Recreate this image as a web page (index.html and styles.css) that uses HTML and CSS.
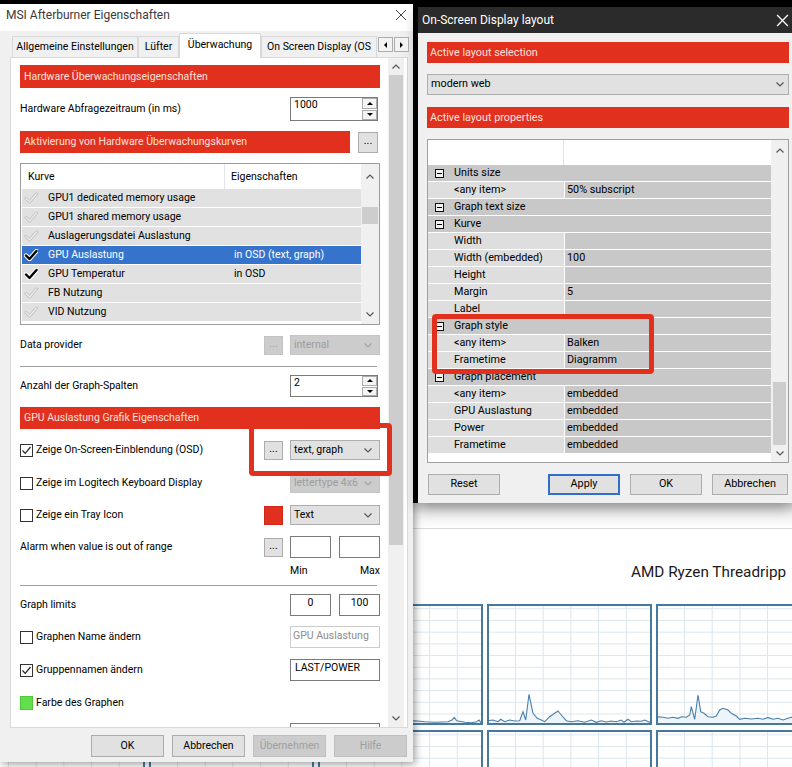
FILE: index.html
```html
<!DOCTYPE html>
<html lang="de">
<head>
	<meta charset="utf-8" />
	<title>MSI Afterburner Eigenschaften</title>
	<link rel="stylesheet" href="styles.css">
</head>
<body>
<div class="desk">

	<!-- task manager window in the back -->
	<div class="taskman">
		<div class="tm-bar"></div>
		<div class="tm-title">AMD Ryzen Threadripp</div>
		<div class="tm-graphs">
			<div class="graph"></div>
			<div class="graph"></div>
			<div class="graph">
				<svg viewBox="2 2 161 117" preserveAspectRatio="none">
					<polygon class="fill" points="0,117 20,117.5 40,117 60,117.7 80,117.3 97,116.7 107,117.7 117,118.3 130,117.7 134,116 136.3,113.3 138.7,116.7 147,118.3 153.7,118.7 158.7,117.7 161,116 163,118.7 165,118 165,121 0,121"/>
					<polyline class="line" points="0,117 20,117.5 40,117 60,117.7 80,117.3 97,116.7 107,117.7 117,118.3 130,117.7 134,116 136.3,113.3 138.7,116.7 147,118.3 153.7,118.7 158.7,117.7 161,116 163,118.7 165,118"/>
				</svg>
			</div>
			<div class="graph">
				<svg viewBox="2 2 161 117" preserveAspectRatio="none">
					<polygon class="fill" points="0,116.7 6,116 11,117.7 13.7,115.3 17.7,117.7 22.7,116 27.7,117 32.7,116.7 36,107.7 38.7,116 42,90.3 46,109.3 50.3,114.3 54.3,116 57.7,117.7 62.7,112.7 67.7,109.3 71,107 74.3,111 79.3,116.7 84.3,117.7 91,116.7 97.7,118.3 104.3,116 109.3,118.3 114.3,116.7 119.3,118 124.3,117 129.3,117.7 134.3,116 137,118.3 141,115.3 144.3,117.7 149.3,117 154.3,117.3 157.7,116 163.7,118.7 165,118 165,121 0,121"/>
					<polyline class="line" points="0,116.7 6,116 11,117.7 13.7,115.3 17.7,117.7 22.7,116 27.7,117 32.7,116.7 36,107.7 38.7,116 42,90.3 46,109.3 50.3,114.3 54.3,116 57.7,117.7 62.7,112.7 67.7,109.3 71,107 74.3,111 79.3,116.7 84.3,117.7 91,116.7 97.7,118.3 104.3,116 109.3,118.3 114.3,116.7 119.3,118 124.3,117 129.3,117.7 134.3,116 137,118.3 141,115.3 144.3,117.7 149.3,117 154.3,117.3 157.7,116 163.7,118.7 165,118"/>
				</svg>
			</div>
			<div class="graph">
				<svg viewBox="2 2 161 117" preserveAspectRatio="none">
					<polygon class="fill" points="0,112.7 7,113.3 12,114.3 17,113.3 22,114.3 25.3,112.7 30.3,113.3 33.7,111 35.3,102.7 38.7,115.3 42,91 44.7,107.7 48,109.3 52,112.7 57,113.3 60.3,112 63.7,106 67,104.3 72,106 75.3,109.3 80.3,112 83.7,115.3 88.7,114.3 95.3,115 102,114.3 107,115.3 112,113.7 117,115.3 122,114.3 127,116 132,114.3 135.7,113.3 140,115 146,114 152,115.5 158,114 165,115 165,121 0,121"/>
					<polyline class="line" points="0,112.7 7,113.3 12,114.3 17,113.3 22,114.3 25.3,112.7 30.3,113.3 33.7,111 35.3,102.7 38.7,115.3 42,91 44.7,107.7 48,109.3 52,112.7 57,113.3 60.3,112 63.7,106 67,104.3 72,106 75.3,109.3 80.3,112 83.7,115.3 88.7,114.3 95.3,115 102,114.3 107,115.3 112,113.7 117,115.3 122,114.3 127,116 132,114.3 135.7,113.3 140,115 146,114 152,115.5 158,114 165,115"/>
				</svg>
			</div>
			<div class="graph"></div>
			<div class="graph"></div>
			<div class="graph"></div>
			<div class="graph"></div>
			<div class="graph"></div>
		</div>
	</div>

	<!-- MSI Afterburner properties -->
	<div class="dlg">
		<div class="dlg-title">
			<span>MSI Afterburner Eigenschaften</span>
			<svg class="close" viewBox="0 0 12 12"><path d="M1 1 11 11 M11 1 1 11"/></svg>
		</div>

		<div class="tabs">
			<div class="tab t1">Allgemeine Einstellungen</div>
			<div class="tab t2">Lüfter</div>
			<div class="tab t3">Überwachung</div>
			<div class="tab t4">On Screen Display (OS</div>
			<div class="tab-arr"><span class="tri-l"></span></div>
			<div class="tab-arr"><span class="tri-r"></span></div>
		</div>

		<div class="panel">
			<div class="form">
				<div class="rbar first">Hardware Überwachungseigenschaften</div>

				<div class="row h24 mt9">
					<span class="lbl">Hardware Abfragezeitraum (in ms)</span>
					<div class="spin">
						<span class="spin-val">1000</span>
						<div class="spin-btns"><span><i class="tri-u"></i></span><span><i class="tri-d"></i></span></div>
					</div>
				</div>

				<div class="row">
					<div class="rbar short">Aktivierung von Hardware Überwachungskurven</div>
					<span class="dots end">...</span>
				</div>

				<div class="list">
					<div class="list-body">
						<div class="list-head"><span>Kurve</span><span>Eigenschaften</span></div>
						<div class="li">
							<svg class="ck" viewBox="0 0 14 12"><path class="o" d="M2 6.5 5.5 10 12.5 2"/><path class="i" d="M2 6.5 5.5 10 12.5 2"/></svg>
							<span class="li-name">GPU1 dedicated memory usage</span><span></span>
						</div>
						<div class="li">
							<svg class="ck" viewBox="0 0 14 12"><path class="o" d="M2 6.5 5.5 10 12.5 2"/><path class="i" d="M2 6.5 5.5 10 12.5 2"/></svg>
							<span class="li-name">GPU1 shared memory usage</span><span></span>
						</div>
						<div class="li">
							<svg class="ck" viewBox="0 0 14 12"><path class="o" d="M2 6.5 5.5 10 12.5 2"/><path class="i" d="M2 6.5 5.5 10 12.5 2"/></svg>
							<span class="li-name">Auslagerungsdatei Auslastung</span><span></span>
						</div>
						<div class="li sel">
							<svg class="ck on" viewBox="0 0 14 12"><path class="o" d="M2 6.5 5.5 10 12.5 2"/><path class="i" d="M2 6.5 5.5 10 12.5 2"/></svg>
							<span class="li-name">GPU Auslastung</span><span class="li-val">in OSD (text, graph)</span>
						</div>
						<div class="li">
							<svg class="ck on" viewBox="0 0 14 12"><path class="o" d="M2 6.5 5.5 10 12.5 2"/><path class="i" d="M2 6.5 5.5 10 12.5 2"/></svg>
							<span class="li-name">GPU Temperatur</span><span class="li-val">in OSD</span>
						</div>
						<div class="li">
							<svg class="ck" viewBox="0 0 14 12"><path class="o" d="M2 6.5 5.5 10 12.5 2"/><path class="i" d="M2 6.5 5.5 10 12.5 2"/></svg>
							<span class="li-name">FB Nutzung</span><span></span>
						</div>
						<div class="li">
							<svg class="ck" viewBox="0 0 14 12"><path class="o" d="M2 6.5 5.5 10 12.5 2"/><path class="i" d="M2 6.5 5.5 10 12.5 2"/></svg>
							<span class="li-name">VID Nutzung</span><span></span>
						</div>
					</div>
					<div class="list-sb">
						<div class="sb-up"><svg class="chev" viewBox="0 0 8 5"><path d="M.5 4.5 4 1 7.5 4.5"/></svg></div>
						<div class="sb-thumb"></div>
						<div class="sb-fill"></div>
						<div class="sb-dn"><svg class="chev" viewBox="0 0 8 5"><path d="M.5 .5 4 4 7.5 .5"/></svg></div>
					</div>
				</div>

				<div class="row mt9">
					<span class="lbl">Data provider</span>
					<span class="dots off">...</span>
					<div class="combo off">internal<svg class="chev" viewBox="0 0 8 5"><path d="M.5 .5 4 4 7.5 .5"/></svg></div>
				</div>

				<div class="sep"></div>

				<div class="row mt8">
					<span class="lbl">Anzahl der Graph-Spalten</span>
					<div class="spin">
						<span class="spin-val">2</span>
						<div class="spin-btns"><span><i class="tri-u"></i></span><span><i class="tri-d"></i></span></div>
					</div>
				</div>

				<div class="rbar mt10">GPU Auslastung Grafik Eigenschaften</div>

				<div class="row">
					<span class="cb on"><svg viewBox="0 0 11 11"><path d="M1.5 5.5 4.2 8.3 9.5 2"/></svg></span>
					<span class="lbl">Zeige On-Screen-Einblendung (OSD)</span>
					<span class="dots">...</span>
					<div class="combo">text, graph<svg class="chev" viewBox="0 0 8 5"><path d="M.5 .5 4 4 7.5 .5"/></svg></div>
				</div>

				<div class="row mt11">
					<span class="cb"></span>
					<span class="lbl">Zeige im Logitech Keyboard Display</span>
					<div class="combo off">lettertype 4x6<svg class="chev" viewBox="0 0 8 5"><path d="M.5 .5 4 4 7.5 .5"/></svg></div>
				</div>

				<div class="row">
					<span class="cb"></span>
					<span class="lbl">Zeige ein Tray Icon</span>
					<span class="swatch"></span>
					<div class="combo">Text<svg class="chev" viewBox="0 0 8 5"><path d="M.5 .5 4 4 7.5 .5"/></svg></div>
				</div>

				<div class="row">
					<span class="lbl">Alarm when value is out of range</span>
					<span class="dots">...</span>
					<span class="edit"></span>
					<span class="edit"></span>
				</div>
				<div class="minmax"><span>Min</span><span>Max</span></div>

				<div class="sep s2"></div>

				<div class="row mt8">
					<span class="lbl">Graph limits</span>
					<span class="edit num">0</span>
					<span class="edit num">100</span>
				</div>

				<div class="row">
					<span class="cb"></span>
					<span class="lbl">Graphen Name ändern</span>
					<span class="edit wide off">GPU Auslastung</span>
				</div>

				<div class="row mt11">
					<span class="cb on"><svg viewBox="0 0 11 11"><path d="M1.5 5.5 4.2 8.3 9.5 2"/></svg></span>
					<span class="lbl">Gruppennamen ändern</span>
					<span class="edit wide">LAST/POWER</span>
				</div>

				<div class="row mt11">
					<span class="green"></span>
					<span class="lbl">Farbe des Graphen</span>
				</div>

				<div class="row mt9">
					<span class="lbl"></span>
					<span class="edit wide"></span>
				</div>
			</div>

			<div class="vscroll">
				<div class="sb-up"><svg class="chev" viewBox="0 0 8 5"><path d="M.5 4.5 4 1 7.5 4.5"/></svg></div>
				<div class="sb-track"><div class="sb-thumb"></div></div>
				<div class="sb-dn"><svg class="chev" viewBox="0 0 8 5"><path d="M.5 .5 4 4 7.5 .5"/></svg></div>
			</div>
		</div>

		<div class="dlg-btns">
			<span class="btn">OK</span>
			<span class="btn">Abbrechen</span>
			<span class="btn off">Übernehmen</span>
			<span class="btn off">Hilfe</span>
		</div>
	</div>

	<!-- OSD layout editor -->
	<div class="osd">
		<div class="osd-title">
			<span>On-Screen Display layout</span>
			<svg class="close w" viewBox="0 0 12 12"><path d="M1 1 11 11 M11 1 1 11"/></svg>
		</div>
		<div class="osd-body">
			<div class="rbar">Active layout selection</div>
			<div class="combo big">modern web<svg class="chev" viewBox="0 0 8 5"><path d="M.5 .5 4 4 7.5 .5"/></svg></div>
			<div class="rbar second">Active layout properties</div>

			<div class="pg">
				<div class="pg-main">
					<div class="pg-head"><span></span><span></span></div>
					<div class="pr cat"><span class="pk"><i class="exp"></i>Units size</span></div>
					<div class="pr"><span class="pk">&lt;any item&gt;</span><span class="pv">50% subscript</span></div>
					<div class="pr cat"><span class="pk"><i class="exp"></i>Graph text size</span></div>
					<div class="pr cat"><span class="pk"><i class="exp"></i>Kurve</span></div>
					<div class="pr"><span class="pk">Width</span><span class="pv"></span></div>
					<div class="pr"><span class="pk">Width (embedded)</span><span class="pv">100</span></div>
					<div class="pr"><span class="pk">Height</span><span class="pv"></span></div>
					<div class="pr"><span class="pk">Margin</span><span class="pv">5</span></div>
					<div class="pr"><span class="pk">Label</span><span class="pv"></span></div>
					<div class="pr cat"><span class="pk"><i class="exp"></i>Graph style</span></div>
					<div class="pr"><span class="pk">&lt;any item&gt;</span><span class="pv">Balken</span></div>
					<div class="pr"><span class="pk">Frametime</span><span class="pv">Diagramm</span></div>
					<div class="pr cat"><span class="pk"><i class="exp"></i>Graph placement</span></div>
					<div class="pr"><span class="pk">&lt;any item&gt;</span><span class="pv">embedded</span></div>
					<div class="pr"><span class="pk">GPU Auslastung</span><span class="pv">embedded</span></div>
					<div class="pr"><span class="pk">Power</span><span class="pv">embedded</span></div>
					<div class="pr"><span class="pk">Frametime</span><span class="pv">embedded</span></div>
				</div>
				<div class="pg-sb">
					<div class="sb-up"><svg class="chev" viewBox="0 0 8 5"><path d="M.5 4.5 4 1 7.5 4.5"/></svg></div>
					<div class="sb-thumb"></div>
					<div class="sb-dn"><svg class="chev" viewBox="0 0 8 5"><path d="M.5 .5 4 4 7.5 .5"/></svg></div>
				</div>
			</div>

			<div class="osd-btns">
				<span class="btn">Reset</span>
				<span class="spacer"></span>
				<span class="btn focus">Apply</span>
				<span class="btn">OK</span>
				<span class="btn wide">Abbrechen</span>
			</div>
		</div>
	</div>

	<!-- red markers drawn over the screenshot -->
	<div class="mark m1"></div>
	<div class="mark m2"></div>
</div>
</body>
</html>
```

FILE: styles.css
```css
*{
	box-sizing: border-box;
}

body{
	margin: 0;
	background: #000;
	font: 10.5px/1.2 Roboto, "Liberation Sans", Arial, sans-serif;
	color: #000;
}

.desk{
	position: relative;
	width: 792px;
	height: 767px;
	overflow: hidden;
	background: #000;
}

/* ---------- task manager (background) ---------- */

.taskman{
	position: absolute;
	left: -20px;
	top: 503px;
	width: 840px;
	height: 264px;
	background: #fff;
}

.tm-bar{
	height: 26px;
	border-bottom: 1px solid #d9d9d9;
	background: linear-gradient(#d6d6d6, #f2f2f2 45%, #fff);
}

.tm-title{
	margin: 33px 0 0 651px;
	font-size: 15.3px;
	line-height: 20px;
	color: #1a1a1a;
	white-space: nowrap;
}

.tm-graphs{
	display: grid;
	grid-template-columns: repeat(5, 165px);
	gap: 5px 4px;
	margin-top: 22px;
}

.graph{
	height: 121px;
	border: 2px solid #47799f;
	background-color: #fff;
	background-image:
		linear-gradient(to right, #dce6ee 1px, transparent 1px),
		linear-gradient(to bottom, #dce6ee 1px, transparent 1px);
	background-size: 27.7px 11.7px;
	background-position: 26px 2.3px;
}

.graph svg{
	display: block;
	width: 100%;
	height: 100%;
}

.graph .fill{
	fill: #edf4fa;
}

.graph .line{
	fill: none;
	stroke: #4a7fab;
	stroke-width: 1.1;
}

/* ---------- shared controls ---------- */

.rbar{
	height: 22px;
	line-height: 22px;
	padding-left: 4px;
	background: #e1301e;
	color: #fbe1db;
	white-space: nowrap;
}

.chev{
	width: 8px;
	height: 5px;
	display: block;
}

.chev path{
	fill: none;
	stroke: #555;
	stroke-width: 1.2;
}

.close{
	width: 12px;
	height: 12px;
	display: block;
}

.close path{
	fill: none;
	stroke: #444;
	stroke-width: 1;
}

.close.w path{
	stroke: #fff;
	stroke-width: 1.2;
}

.btn{
	width: 73px;
	height: 22px;
	border: 1px solid #adadad;
	background: #e1e1e1;
	display: flex;
	align-items: center;
	justify-content: center;
}

.btn.off{
	background: #cccccc;
	border-color: #bfbfbf;
	color: #a0a0a0;
}

.combo{
	width: 90px;
	height: 20px;
	border: 1px solid #adadad;
	background: #e1e1e1;
	display: flex;
	align-items: center;
	justify-content: space-between;
	padding: 0 7px 0 3px;
	white-space: nowrap;
}

.combo.off{
	background: #cccccc;
	border-color: #c4c4c4;
	color: #9d9d9d;
}

.combo.off .chev path{
	stroke: #a5a5a5;
}

.sb-up, .sb-dn{
	display: flex;
	align-items: center;
	justify-content: center;
}

.sb-thumb{
	background: #cdcdcd;
}

/* ---------- afterburner dialog ---------- */

.dlg{
	position: absolute;
	left: 0;
	top: 4px;
	width: 413px;
	height: 758px;
	background: #f0f0f0;
	box-shadow: 2px 2px 8px rgba(0,0,0,.4);
	display: flex;
	flex-direction: column;
}

.dlg-title{
	height: 27px;
	flex: none;
	background: #fff;
	display: flex;
	justify-content: space-between;
	padding: 4px 6px 0 6px;
	font-size: 12px;
	line-height: 15px;
	color: #3a3a3a;
}

.dlg-title .close{
	margin-top: 1px;
}

.tabs{
	height: 26px;
	flex: none;
	display: flex;
	align-items: flex-end;
	padding-left: 12px;
	position: relative;
	z-index: 1;
}

.tab{
	height: 21px;
	border: 1px solid #d9d9d9;
	border-bottom: 0;
	background: #f0f0f0;
	line-height: 20px;
	text-align: center;
	white-space: nowrap;
	overflow: hidden;
}

.tab.t1{ width: 126px; }
.tab.t2{ width: 41px; }

.tab.t3{
	width: 82px;
	height: 25px;
	line-height: 21px;
	margin-bottom: -1px;
	background: #fff;
}

.tab.t4{
	width: 116px;
	text-align: left;
	padding-left: 5px;
}

.tab-arr{
	width: 15px;
	height: 15px;
	margin: 0 0 5px 1px;
	border: 1px solid #adadad;
	background: #f3f3f3;
	display: flex;
	align-items: center;
	justify-content: center;
}

.tab-arr:first-of-type{
	margin-left: 0;
}

.tri-l, .tri-r, .tri-u, .tri-d{
	width: 0;
	height: 0;
	border: 3px solid transparent;
	display: block;
}

.tri-l{ border-right-color: #000; border-left-width: 0; }
.tri-r{ border-left-color: #000; border-right-width: 0; }
.tri-u{ border-bottom-color: #000; border-top-width: 0; }
.tri-d{ border-top-color: #000; border-bottom-width: 0; }

.panel{
	margin-left: 10px;
	width: 398px;
	height: 671px;
	flex: none;
	background: #fff;
	border: 1px solid #d9d9d9;
	display: flex;
	overflow: hidden;
}

.form{
	width: 376px;
	flex: none;
	padding: 0 7px 0 9px;
}

.rbar.first{
	margin-top: 7px;
	height: 23px;
	line-height: 23px;
}

.rbar.short{
	width: 330px;
}

.rbar.mt10{
	margin-top: 10px;
}

.row{
	display: flex;
	align-items: center;
	height: 22px;
	margin-top: 10px;
}

.row.h24{ height: 24px; }
.row.mt8{ margin-top: 8px; }
.row.mt9{ margin-top: 9px; }
.row.mt11{ margin-top: 11px; }

.lbl{
	flex: 1;
	white-space: nowrap;
}

.dots{
	width: 19px;
	height: 19px;
	margin-right: 7px;
	border: 1px solid #adadad;
	background: #e1e1e1;
	text-align: center;
	line-height: 13px;
}

.dots.end{
	width: 20px;
	height: 21px;
	margin: 0 2px 0 auto;
	line-height: 15px;
}

.dots.off{
	background: #cccccc;
	border-color: #c4c4c4;
	color: #a0a0a0;
}

.spin{
	width: 88px;
	height: 100%;
	margin-right: 2px;
	display: flex;
	border: 1px solid #7a7a7a;
	background: #fff;
}

.spin-val{
	flex: 1;
	padding: 1px 0 0 3px;
}

.spin-btns{
	width: 16px;
	display: flex;
	flex-direction: column;
	gap: 1px;
	padding: 0 0 0 1px;
}

.spin-btns span{
	flex: 1;
	border: 1px solid #acacac;
	background: #f4f4f4;
	display: flex;
	align-items: center;
	justify-content: center;
}

.list{
	margin-top: 10px;
	height: 162px;
	border: 1px solid #9c9c9c;
	display: flex;
	background: #fff;
}

.list-body{
	flex: 1;
	padding-left: 1px;
}

.list-head{
	height: 25px;
	display: grid;
	grid-template-columns: 203px 1fr;
}

.list-head span{
	padding-left: 6px;
	line-height: 25px;
}

.list-head span:first-child{
	border-right: 1px solid #e5e5e5;
}

.li{
	height: 19px;
	display: grid;
	grid-template-columns: 14px 194px 1fr;
	align-items: center;
	padding-left: 2px;
	background: #e1e1e1;
	border-bottom: 1px solid #fff;
	white-space: nowrap;
}

.li.sel{
	background: #3673cd;
	color: #fff;
}

.li-name{
	padding-left: 10px;
}

.li-val{
	padding-left: 2px;
}

.ck{
	width: 14px;
	height: 12px;
	display: block;
}

.ck path{
	fill: none;
	stroke-linecap: round;
	stroke-linejoin: round;
}

.ck .o{ stroke: #c2c2c2; stroke-width: 3; }
.ck .i{ stroke: #ececec; stroke-width: 1.3; }
.ck.on .o{ stroke: #fff; stroke-width: 4.4; }
.ck.on .i{ stroke: #000; stroke-width: 2.4; }

.list-sb{
	width: 18px;
	background: #f0f0f0;
	display: flex;
	flex-direction: column;
}

.list-sb .sb-up{ height: 24px; }

.list-sb .sb-thumb{
	height: 17px;
	margin: 19px 1px 0 1px;
}

.list-sb .sb-fill{ flex: 1; }
.list-sb .sb-dn{ height: 20px; }

.sep{
	height: 1px;
	margin: 10px 3px 0 0;
	background: #a0a0a0;
}

.sep.s2{
	margin-top: 7px;
}

.cb{
	width: 13px;
	height: 13px;
	margin-right: 3px;
	border: 1px solid #333;
	background: #fff;
	display: flex;
	align-items: center;
	justify-content: center;
}

.cb svg{
	width: 11px;
	height: 11px;
	display: block;
}

.cb path{
	fill: none;
	stroke: #222;
	stroke-width: 1.2;
}

.swatch{
	width: 19px;
	height: 19px;
	margin-right: 7px;
	background: #e1301e;
	border: 1px solid #d02818;
}

.green{
	width: 13px;
	height: 14px;
	margin-right: 3px;
	background: #62e04c;
	border: 1px solid #4fc83a;
}

.edit{
	width: 41px;
	height: 22px;
	border: 1px solid #7a7a7a;
	background: #fff;
	padding: 2px 0 0 3px;
	white-space: nowrap;
}

.edit + .edit{
	margin-left: 8px;
}

.edit.num{
	text-align: center;
	padding-left: 0;
}

.edit.wide{
	width: 90px;
	padding-left: 4px;
}

.edit.off{
	border-color: #cccccc;
	color: #8c8c8c;
	padding: 3px 0 0 2px;
}

.minmax{
	width: 90px;
	height: 14px;
	margin: 6px 0 0 auto;
	line-height: 14px;
	display: flex;
	justify-content: space-between;
}

.vscroll{
	width: 16px;
	margin-left: 1px;
	flex: none;
	display: flex;
	flex-direction: column;
	background: #f0f0f0;
}

.vscroll .sb-up{ height: 17px; }

.vscroll .sb-track{
	flex: 1;
}

.vscroll .sb-thumb{
	height: 470px;
	margin: 0 1px;
}

.vscroll .sb-dn{ height: 18px; }

.dlg-btns{
	margin-top: 7px;
	display: flex;
	justify-content: flex-end;
	gap: 8px;
	padding-right: 6px;
}

/* ---------- OSD layout window ---------- */

.osd{
	position: absolute;
	left: 418px;
	top: 7px;
	width: 374px;
	height: 496px;
	background: #f0f0f0;
	box-shadow: 0 5px 14px rgba(0,0,0,.35);
	font-size: 10.8px;
}

.osd-title{
	height: 26px;
	background: #2b2b2b;
	color: #fff;
	font-size: 12px;
	padding: 0 3px 0 4px;
	display: flex;
	align-items: center;
	justify-content: space-between;
}

.osd-title .close{
	width: 13px;
	height: 13px;
}

.osd-body{
	padding: 9px 3px 0 9px;
}

.osd .rbar{
	height: 21px;
	line-height: 21px;
	padding-left: 3px;
}

.osd .rbar.second{
	margin-top: 12px;
}

.combo.big{
	width: auto;
	height: 21px;
	margin-top: 11px;
	padding: 0 4px 0 3px;
}

.pg{
	margin-top: 11px;
	height: 324px;
	border: 1px solid #a0a0a0;
	background: #fff;
	display: flex;
}

.pg-main{
	flex: 1;
}

.pg-head{
	height: 25px;
	display: grid;
	grid-template-columns: 136px 1fr;
}

.pg-head span:first-child{
	border-right: 1px solid #e3e3e3;
}

.pr{
	height: 17px;
	display: grid;
	grid-template-columns: 136px 1fr;
	column-gap: 1px;
	border-bottom: 1px solid #fff;
	white-space: nowrap;
}

.pk{
	background: #dedede;
	padding-left: 26px;
	display: flex;
	align-items: center;
}

.pv{
	background: #c8c8c8;
	padding-left: 2px;
	display: flex;
	align-items: center;
}

.pr.cat .pk{
	grid-column: 1 / -1;
	background: #c8c8c8;
	padding-left: 7px;
}

.exp{
	width: 9px;
	height: 9px;
	margin-right: 10px;
	border: 1px solid #111;
	background: #f2f2f2;
	position: relative;
}

.exp::after{
	content: "";
	position: absolute;
	left: 1px;
	right: 1px;
	top: 3px;
	height: 1px;
	background: #000;
}

.pg-sb{
	width: 17px;
	background: #f0f0f0;
	display: flex;
	flex-direction: column;
}

.pg-sb .sb-up{ height: 20px; }

.pg-sb .sb-thumb{
	height: 63px;
	margin: 222px 2px 0 2px;
}

.pg-sb .sb-dn{
	flex: 1;
}

.osd-btns{
	margin-top: 11px;
	margin-left: 1px;
	display: flex;
	gap: 10px;
}

.osd-btns .btn{
	width: 72px;
	height: 21px;
}

.osd-btns .btn.wide{
	width: 76px;
}

.osd-btns .spacer{
	width: 28px;
}

.btn.focus{
	border: 2px solid #2d6fcb;
}

/* ---------- red markers ---------- */

.mark{
	position: absolute;
	border: 5px solid #e2301f;
	border-radius: 4px;
}

.mark.m1{
	left: 249px;
	top: 423px;
	width: 143px;
	height: 53px;
}

.mark.m2{
	left: 432px;
	top: 314px;
	width: 222px;
	height: 60px;
}
```
